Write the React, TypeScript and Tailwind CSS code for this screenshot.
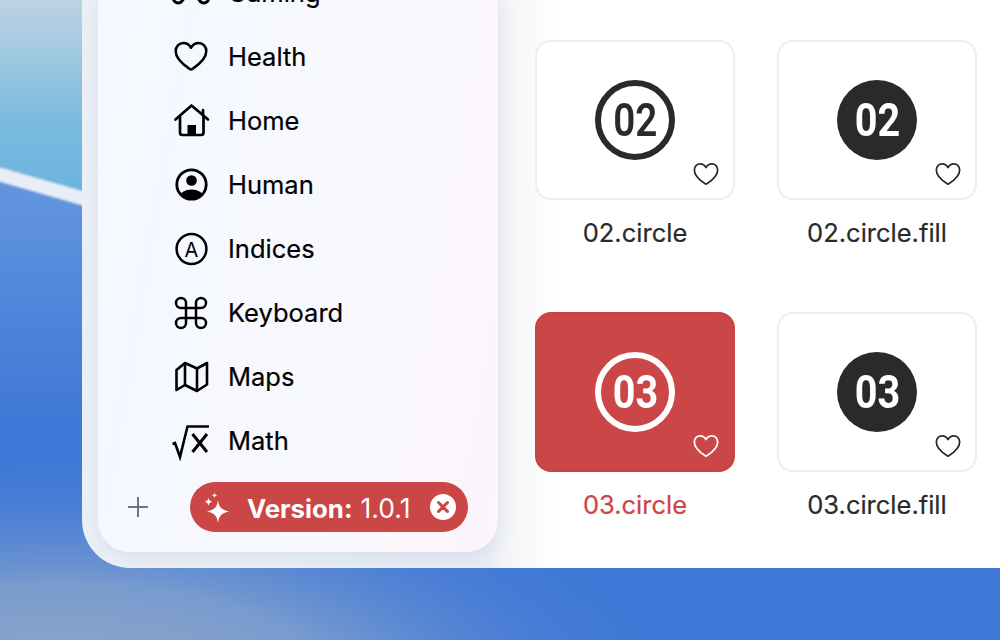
import React from "react";
import { Command } from "lucide-react";

const HEART = "M12 20.6C11.7 20.6 11.3 20.4 11 20.2C6 16.9 2 13 2 8.6C2 5.5 4.2 3.3 7 3.3C9.1 3.3 10.9 4.5 12 6.4C13.1 4.5 14.9 3.3 17 3.3C19.8 3.3 22 5.5 22 8.6C22 13 18 16.9 13 20.2C12.7 20.4 12.3 20.6 12 20.6Z";

function Wallpaper() {
  return (
    <svg className="absolute inset-0" width="1000" height="640" viewBox="0 0 1000 640">
      <defs>
        <linearGradient id="sky" x1="0" y1="0" x2="0" y2="1">
          <stop offset="0" stopColor="#bdd3e2" />
          <stop offset="0.55" stopColor="#7dbbdf" />
          <stop offset="1" stopColor="#68b2dd" />
        </linearGradient>
        <linearGradient id="sea" x1="0" y1="200" x2="0" y2="640" gradientUnits="userSpaceOnUse">
          <stop offset="0" stopColor="#6094de" />
          <stop offset="0.5" stopColor="#3f78d6" />
          <stop offset="1" stopColor="#3f78d6" />
        </linearGradient>
        <radialGradient id="haze" cx="60" cy="700" r="640" gradientUnits="userSpaceOnUse" gradientTransform="translate(0 420) scale(1 0.4)">
          <stop offset="0" stopColor="#9aabc2" />
          <stop offset="0.45" stopColor="#7f9fce" stopOpacity="0.9" />
          <stop offset="1" stopColor="#4178d8" stopOpacity="0" />
        </radialGradient>
        <filter id="soft" filterUnits="userSpaceOnUse" x="0" y="0" width="1000" height="640">
          <feGaussianBlur stdDeviation="1.2" />
        </filter>
      </defs>
      <rect width="1000" height="640" fill="url(#sea)" />
      <rect width="1000" height="640" fill="url(#haze)" />
      <polygon points="0,0 120,0 120,210 0,175" fill="url(#sky)" />
      <line x1="-20" y1="169" x2="120" y2="209" stroke="#e9edf5" strokeWidth="14" filter="url(#soft)" />
    </svg>
  );
}

function GameIcon() {
  return (
    <svg width="40" height="40" viewBox="0 6 40 40" fill="none" stroke="black" strokeWidth="3" strokeLinejoin="round">
      <path d="M12 6H28C33 6 35 10 36 16C37 22 38 27 38 30C38 34 35 36 33 36C31 36 29 35 27 31C26 29 25 28 23 28H17C15 28 14 29 13 31C11 35 9 36 7 36C5 36 2 34 2 30C2 27 3 22 4 16C5 10 7 6 12 6Z" />
    </svg>
  );
}

function HeartIcon() {
  return (
    <svg width="40" height="40" viewBox="0 0 24 24" fill="none" stroke="black" strokeWidth="1.65" strokeLinejoin="round">
      <path d={HEART} transform="translate(12 11.6) scale(0.92) translate(-12 -12)" />
    </svg>
  );
}

function HomeIcon() {
  return (
    <svg width="40" height="40" viewBox="0 0 40 40" fill="none" stroke="black" strokeWidth="2.7" strokeLinecap="round" strokeLinejoin="round">
      <path d="M4.5 18.5L20.5 4.5L37 18.5" />
      <path d="M32 9V13" />
      <path d="M9 16V31.5C9 33 10 34 11.5 34H30C31.5 34 32.5 33 32.5 31.5V16" />
      <rect x="16.5" y="24" width="8.5" height="10" fill="black" stroke="none" />
    </svg>
  );
}

function HumanIcon() {
  return (
    <svg width="40" height="40" viewBox="0 0 40 40">
      <defs>
        <clipPath id="humanClip"><circle cx="20.5" cy="19.5" r="15" /></clipPath>
      </defs>
      <circle cx="20.5" cy="15.5" r="5.3" fill="black" />
      <ellipse cx="20.5" cy="32" rx="12" ry="7.5" fill="black" clipPath="url(#humanClip)" />
      <circle cx="20.5" cy="19.5" r="14.7" fill="none" stroke="black" strokeWidth="2.8" />
    </svg>
  );
}

function IndicesIcon() {
  return (
    <svg width="40" height="40" viewBox="0 0 40 40">
      <circle cx="20.5" cy="20" r="14.9" fill="none" stroke="black" strokeWidth="2.5" />
      <text x="20.5" y="27.5" textAnchor="middle" fontSize="20" fontWeight="400" fontFamily="Inter, sans-serif" fill="black">A</text>
    </svg>
  );
}

function MapIcon() {
  return (
    <svg width="40" height="40" viewBox="0 0 40 40" fill="none" stroke="black" strokeWidth="2.6" strokeLinejoin="round">
      <path d="M5.5 13L14 6L26 11.5L36 6V27.5L26 34L14 28L5.5 33Z" />
      <path d="M14 6V28M26 11.5V34" />
    </svg>
  );
}

function MathIcon() {
  return (
    <svg width="40" height="40" viewBox="0 0 40 40" fill="none" stroke="black" strokeWidth="2.6">
      <path d="M1.5 23L4 22L9 36L16.5 5.5H38" strokeLinejoin="miter" />
      <path d="M21.5 13L36 31M36 13L21.5 31" strokeWidth="3" />
    </svg>
  );
}

function Sparkles() {
  return (
    <svg width="36" height="36" viewBox="0 -3 36 36" fill="white" className="overflow-visible">
      <path d="M20 7.5C20.8 14.5 22.5 17.4 31 19.5C22.5 21.6 20.8 24.5 20 31.5C19.2 24.5 17.5 21.6 9 19.5C17.5 17.4 19.2 14.5 20 7.5Z" />
      <path d="M10.5 5.5C10.9 8 11.5 8.9 14.5 9.7C11.5 10.5 10.9 11.4 10.5 14C10.1 11.4 9.5 10.5 6.5 9.7C9.5 8.9 10.1 8 10.5 5.5Z" />
      <path d="M16.5 0.5C16.8 2.3 17.2 2.8 19.3 3.3C17.2 3.8 16.8 4.3 16.5 6.1C16.2 4.3 15.8 3.8 13.7 3.3C15.8 2.8 16.2 2.3 16.5 0.5Z" />
    </svg>
  );
}

const rows: { label: string; icon: React.ReactNode }[] = [
  { label: "Gaming", icon: <GameIcon /> },
  { label: "Health", icon: <HeartIcon /> },
  { label: "Home", icon: <HomeIcon /> },
  { label: "Human", icon: <HumanIcon /> },
  { label: "Indices", icon: <IndicesIcon /> },
  { label: "Keyboard", icon: <Command size={40} strokeWidth={1.5} color="black" /> },
  { label: "Maps", icon: <MapIcon /> },
  { label: "Math", icon: <MathIcon /> },
];

function Card({ num, fill, selected }: { num: string; fill?: boolean; selected?: boolean }) {
  const name = `${num}.circle${fill ? ".fill" : ""}`;
  return (
    <div className="flex flex-col items-center">
      <div
        className={
          selected
            ? "relative flex h-40 w-[200px] items-center justify-center rounded-2xl border-2 border-[#c64444] bg-[#cb4646]"
            : "relative flex h-40 w-[200px] items-center justify-center rounded-2xl border-2 border-[#eeeeee] bg-white"
        }
      >
        <div
          className={
            fill
              ? "flex h-20 w-20 items-center justify-center rounded-full bg-[#2a2a2a] text-white"
              : selected
                ? "flex h-20 w-20 items-center justify-center rounded-full border-[6px] border-white text-white"
                : "flex h-20 w-20 items-center justify-center rounded-full border-[6px] border-[#2a2a2a] text-[#2a2a2a]"
          }
        >
          <span
            className={
              fill || selected
                ? "scale-x-[0.86] font-['Roboto',sans-serif] text-[46px] leading-none font-bold"
                : "scale-x-[0.84] font-['Roboto',sans-serif] text-[46px] leading-none font-semibold"
            }
          >
            {num}
          </span>
        </div>
        <svg
          className="absolute right-[13px] bottom-[10px]"
          width="28"
          height="28"
          viewBox="0 0 24 24"
          fill="none"
          stroke={selected ? "white" : "#2a2a2a"}
          strokeWidth="1.5"
          strokeLinejoin="round"
        >
          <path d={HEART} />
        </svg>
      </div>
      <div className={selected ? "mt-4 h-[34px] text-[25.5px] leading-[34px] text-[#cb4646] [-webkit-text-stroke:0.2px_currentColor]" : "mt-4 h-[34px] text-[25.5px] leading-[34px] text-[#2a2a2a] [-webkit-text-stroke:0.2px_currentColor]"}>
        {name}
      </div>
    </div>
  );
}

export default function App() {
  return (
    <div className="relative h-[640px] w-[1000px] overflow-hidden font-['Inter',sans-serif]">
      <Wallpaper />
      <div className="relative h-[568px] pl-[82px]">
        <div className="flex h-full overflow-hidden rounded-bl-[48px] bg-[linear-gradient(90deg,#edf1f6_0%,#e8edf4_44%,#f3f4f7_46%,#ffffff_52%)]">
          <aside className="mb-4 ml-4 flex w-[400px] shrink-0 flex-col justify-end overflow-hidden rounded-b-[32px] bg-[linear-gradient(100deg,#f3f9fe_0%,#f8f8fe_60%,#fcf5fb_100%)] pb-5 shadow-[0_4px_20px_rgba(90,120,170,0.14)]">
            <ul className="shrink-0">
              {rows.map((r) => (
                <li key={r.label} className="flex h-16 items-center gap-[17px] pl-[73px] text-[25.5px] text-black [-webkit-text-stroke:0.2px_currentColor]">
                  <span className="flex h-10 w-10 items-center justify-center">{r.icon}</span>
                  <span>{r.label}</span>
                </li>
              ))}
            </ul>
            <div className="mt-[9px] flex shrink-0 items-center pl-[29px]">
              <svg width="22" height="22" viewBox="0 0 22 22" stroke="#6f757c" strokeWidth="2">
                <path d="M11 1V21M1 11H21" />
              </svg>
              <div className="ml-[41px] flex h-[50px] w-[278px] items-center rounded-full bg-[#cb4646] pr-[12px] pl-[8px] text-white">
                <Sparkles />
                <span className="mt-1 ml-[13px] text-[25.8px] font-bold">Version:</span>
                <span className="mt-1 ml-[8px] text-[26.5px] font-normal">1.0.1</span>
                <svg className="ml-auto" width="26" height="26" viewBox="0 0 26 26">
                  <circle cx="13" cy="13" r="13" fill="white" />
                  <path d="M8.5 8.5L17.5 17.5M17.5 8.5L8.5 17.5" stroke="#cb4646" strokeWidth="3" strokeLinecap="round" />
                </svg>
              </div>
            </div>
          </aside>
          <main className="grid grid-cols-[200px_200px] content-start gap-x-[42px] gap-y-[62px] pt-10 pl-[37px]">
            <Card num="02" />
            <Card num="02" fill />
            <Card num="03" selected />
            <Card num="03" fill />
          </main>
        </div>
      </div>
    </div>
  );
}
